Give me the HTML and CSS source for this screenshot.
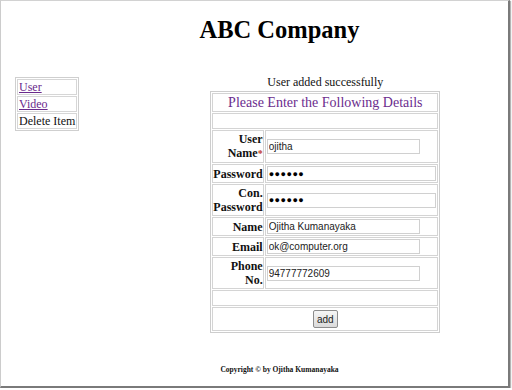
FILE: index.html
```html
<!DOCTYPE html>
<html>
<head>
<meta charset="utf-8">
<title>ABC Company</title>
<link rel="stylesheet" href="styles.css">
</head>
<body>
<div class="frame">
  <div class="header">
    <h1 class="title">ABC Company</h1>
  </div>
  <div class="main">
    <table class="nav">
      <tr><td><a href="#">User</a></td></tr>
      <tr><td><a href="#">Video</a></td></tr>
      <tr><td>Delete Item</td></tr>
    </table>
    <div class="content">
      <p class="message">User added successfully</p>
      <table class="form">
        <tr><td colspan="2" class="heading">Please Enter the Following Details</td></tr>
        <tr><td colspan="2" class="spacer">&nbsp;</td></tr>
        <tr>
          <td class="label">User<br>Name<span class="req">*</span></td>
          <td class="field"><input class="inp" type="text" value="ojitha"></td>
        </tr>
        <tr>
          <td class="label">Password</td>
          <td class="field"><input class="inp pw" type="text" value="●●●●●●"></td>
        </tr>
        <tr>
          <td class="label">Con.<br>Password</td>
          <td class="field"><input class="inp pw" type="text" value="●●●●●●"></td>
        </tr>
        <tr>
          <td class="label">Name</td>
          <td class="field"><input class="inp" type="text" value="Ojitha Kumanayaka"></td>
        </tr>
        <tr>
          <td class="label">Email</td>
          <td class="field"><input class="inp" type="text" value="ok@computer.org"></td>
        </tr>
        <tr>
          <td class="label">Phone<br>No.</td>
          <td class="field"><input class="inp" type="text" value="94777772609"></td>
        </tr>
        <tr><td colspan="2" class="spacer">&nbsp;</td></tr>
        <tr><td colspan="2" class="actions"><button class="btn" type="button">add</button></td></tr>
      </table>
    </div>
  </div>
  <div class="footer">Copyright © by Ojitha Kumanayaka</div>
</div>
</body>
</html>
```

FILE: styles.css
```css
html, body {
  margin: 0;
  padding: 0;
  background: #fff;
}

body {
  font-family: "Liberation Serif", "Times New Roman", serif;
  color: #111;
}

.frame {
  width: 507px;
  height: 385px;
  border-top: 1px solid #d2d2d2;
  border-left: 1px solid #cccccc;
  border-right: 2px solid #7a7a7a;
  border-bottom: 2px solid #7a7a7a;
  box-shadow: 1px 1px 1px #b5b5b5;
  overflow: hidden;
}

.header {
  padding-left: 50px;
}

.title {
  margin: 15px 0 0;
  text-align: center;
  font-size: 24.5px;
  line-height: 28px;
  font-weight: bold;
  color: #000;
}

.main {
  display: flex;
  align-items: flex-start;
  margin-top: 31px;
}

.nav {
  margin: 2px 0 0 14px;
  border: 1px solid #cfcfcf;
  border-spacing: 1px;
  font-size: 12px;
  line-height: 14px;
}

.nav td {
  border: 1px solid #d6d6d6;
  padding: 0 1px;
  white-space: nowrap;
}

.nav a {
  color: #6a2a8c;
  text-decoration: underline;
}

.content {
  margin-left: 131px;
  width: 230px;
}

.message {
  margin: 0 0 1px;
  text-align: center;
  font-size: 12px;
  line-height: 15px;
}

.form {
  width: 230px;
  border: 1px solid #cdcdcd;
  border-spacing: 1px;
  font-size: 12px;
  line-height: 14px;
}

.form td {
  border: 1px solid #d4d4d4;
  padding: 1px 0;
}

.heading {
  text-align: center;
  color: #6b2d8e;
  font-size: 14px;
  line-height: 15px;
}

.spacer {
  line-height: 12px;
}

.label {
  width: 1%;
  text-align: right;
  font-weight: bold;
  white-space: nowrap;
  vertical-align: middle;
}

.req {
  color: #c0392b;
  font-size: 10px;
}

.field {
  vertical-align: middle;
  padding: 1px 1px !important;
}

.inp {
  display: block;
  box-sizing: border-box;
  width: 153px;
  height: 15px;
  margin: 0;
  padding: 0 1px;
  border: 1px solid #d0d0d0;
  font-family: "Liberation Sans", Arial, sans-serif;
  font-size: 10px;
  color: #222;
  background: #fff;
}

.inp.pw {
  width: 100%;
  font-size: 9px;
  font-weight: bold;
  color: #000;
  letter-spacing: 0.5px;
}

.actions {
  text-align: center;
}

.btn {
  height: 18px;
  padding: 0 3px;
  margin: 1px 0;
  border: 1px solid #8c8c8c;
  border-radius: 2px;
  background: linear-gradient(#f6f6f6, #dadada);
  font-family: "Liberation Sans", Arial, sans-serif;
  font-size: 10px;
  color: #222;
}

.footer {
  padding-left: 50px;
  margin-top: 32px;
  text-align: center;
  font-size: 7.5px;
  line-height: 9px;
  font-weight: bold;
}
```
